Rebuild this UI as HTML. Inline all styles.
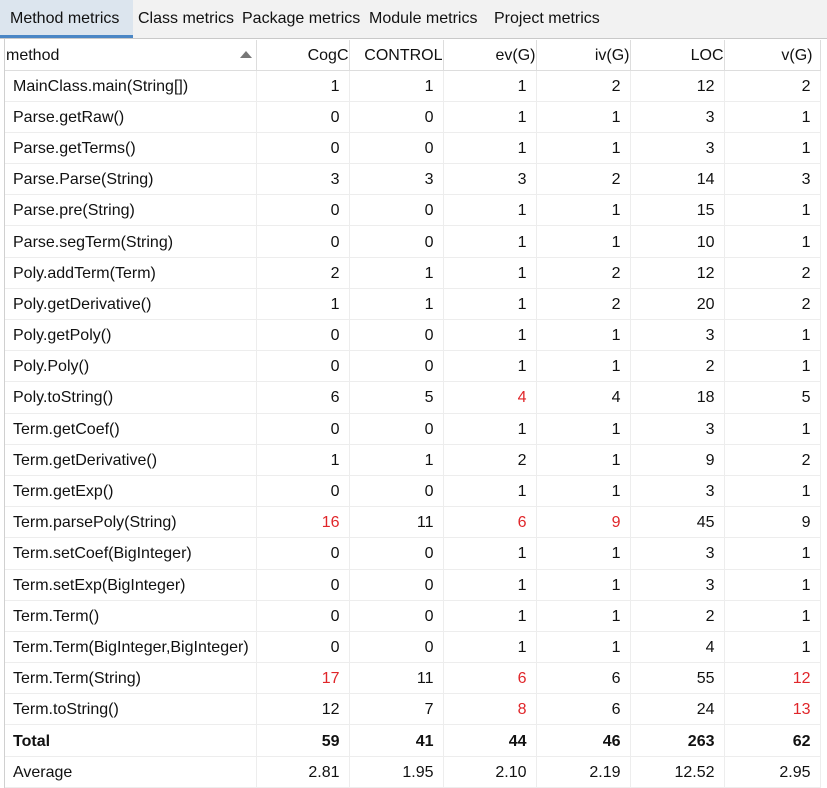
<!DOCTYPE html>
<html><head><meta charset="utf-8"><style>
body{margin:0;width:827px;height:788px;overflow:hidden;background:#fff;font-family:"Liberation Sans","Noto Sans CJK SC",sans-serif;font-size:16px;color:#111;position:relative}
.tabs{position:absolute;left:0;top:0;width:827px;height:38px;background:#f2f2f2;border-bottom:1px solid #c9c9c9}
.tab{position:absolute;top:1px;height:38px;line-height:36px;font-size:16px}
.sel{background:#dce5ee;border-bottom:3px solid #4a86c5;height:35px;left:0;top:0;width:133px}
.lb{position:absolute;left:4px;top:39px;width:1px;height:749px;background:#d0d0d0}
table{position:absolute;left:5px;top:40px;border-collapse:collapse;table-layout:fixed}
td{height:30.2px;border-bottom:1px solid #ededed;border-right:1px solid #ededed;padding:2px 9px 0 0;text-align:right;white-space:nowrap;overflow:hidden;box-sizing:border-box}
td{height:31.2px}
td:first-child{text-align:left;padding:2px 0 0 8px}
tr.h td{height:30px;border-bottom:1px solid #ddd;border-right:1px solid #ddd;padding-right:0}
tr.h td:first-child{padding-left:1px;position:relative}
.r{color:#e0262a}
b{font-weight:bold}
</style></head><body>
<div class="tabs">
<div class="tab sel"><span style="position:absolute;left:10px;top:1px">Method metrics</span></div>
<div class="tab" style="left:138px">Class metrics</div>
<div class="tab" style="left:242px">Package metrics</div>
<div class="tab" style="left:369px">Module metrics</div>
<div class="tab" style="left:494px">Project metrics</div>
</div>
<div class="lb"></div>
<table>
<colgroup><col style="width:251px"><col style="width:93px"><col style="width:94px"><col style="width:93px"><col style="width:94px"><col style="width:94px"><col style="width:96px"></colgroup>
<tr class="h"><td>method<span style="position:absolute;right:4px;top:11px;width:0;height:0;border-left:6px solid transparent;border-right:6px solid transparent;border-bottom:7px solid #777"></span></td><td>CogC</td><td>CONTROL</td><td>ev(G)</td><td>iv(G)</td><td>LOC</td><td style="padding-right:7px">v(G)</td></tr>
<tr><td>MainClass.main(String[])</td><td>1</td><td>1</td><td>1</td><td>2</td><td>12</td><td>2</td></tr>
<tr><td>Parse.getRaw()</td><td>0</td><td>0</td><td>1</td><td>1</td><td>3</td><td>1</td></tr>
<tr><td>Parse.getTerms()</td><td>0</td><td>0</td><td>1</td><td>1</td><td>3</td><td>1</td></tr>
<tr><td>Parse.Parse(String)</td><td>3</td><td>3</td><td>3</td><td>2</td><td>14</td><td>3</td></tr>
<tr><td>Parse.pre(String)</td><td>0</td><td>0</td><td>1</td><td>1</td><td>15</td><td>1</td></tr>
<tr><td>Parse.segTerm(String)</td><td>0</td><td>0</td><td>1</td><td>1</td><td>10</td><td>1</td></tr>
<tr><td>Poly.addTerm(Term)</td><td>2</td><td>1</td><td>1</td><td>2</td><td>12</td><td>2</td></tr>
<tr><td>Poly.getDerivative()</td><td>1</td><td>1</td><td>1</td><td>2</td><td>20</td><td>2</td></tr>
<tr><td>Poly.getPoly()</td><td>0</td><td>0</td><td>1</td><td>1</td><td>3</td><td>1</td></tr>
<tr><td>Poly.Poly()</td><td>0</td><td>0</td><td>1</td><td>1</td><td>2</td><td>1</td></tr>
<tr><td>Poly.toString()</td><td>6</td><td>5</td><td class="r">4</td><td>4</td><td>18</td><td>5</td></tr>
<tr><td>Term.getCoef()</td><td>0</td><td>0</td><td>1</td><td>1</td><td>3</td><td>1</td></tr>
<tr><td>Term.getDerivative()</td><td>1</td><td>1</td><td>2</td><td>1</td><td>9</td><td>2</td></tr>
<tr><td>Term.getExp()</td><td>0</td><td>0</td><td>1</td><td>1</td><td>3</td><td>1</td></tr>
<tr><td>Term.parsePoly(String)</td><td class="r">16</td><td>11</td><td class="r">6</td><td class="r">9</td><td>45</td><td>9</td></tr>
<tr><td>Term.setCoef(BigInteger)</td><td>0</td><td>0</td><td>1</td><td>1</td><td>3</td><td>1</td></tr>
<tr><td>Term.setExp(BigInteger)</td><td>0</td><td>0</td><td>1</td><td>1</td><td>3</td><td>1</td></tr>
<tr><td>Term.Term()</td><td>0</td><td>0</td><td>1</td><td>1</td><td>2</td><td>1</td></tr>
<tr><td>Term.Term(BigInteger,BigInteger)</td><td>0</td><td>0</td><td>1</td><td>1</td><td>4</td><td>1</td></tr>
<tr><td>Term.Term(String)</td><td class="r">17</td><td>11</td><td class="r">6</td><td>6</td><td>55</td><td class="r">12</td></tr>
<tr><td>Term.toString()</td><td>12</td><td>7</td><td class="r">8</td><td>6</td><td>24</td><td class="r">13</td></tr>
<tr><td><b>Total</b></td><td><b>59</b></td><td><b>41</b></td><td><b>44</b></td><td><b>46</b></td><td><b>263</b></td><td><b>62</b></td></tr>
<tr><td>Average</td><td>2.81</td><td>1.95</td><td>2.10</td><td>2.19</td><td>12.52</td><td>2.95</td></tr>
</table>
</body></html>
